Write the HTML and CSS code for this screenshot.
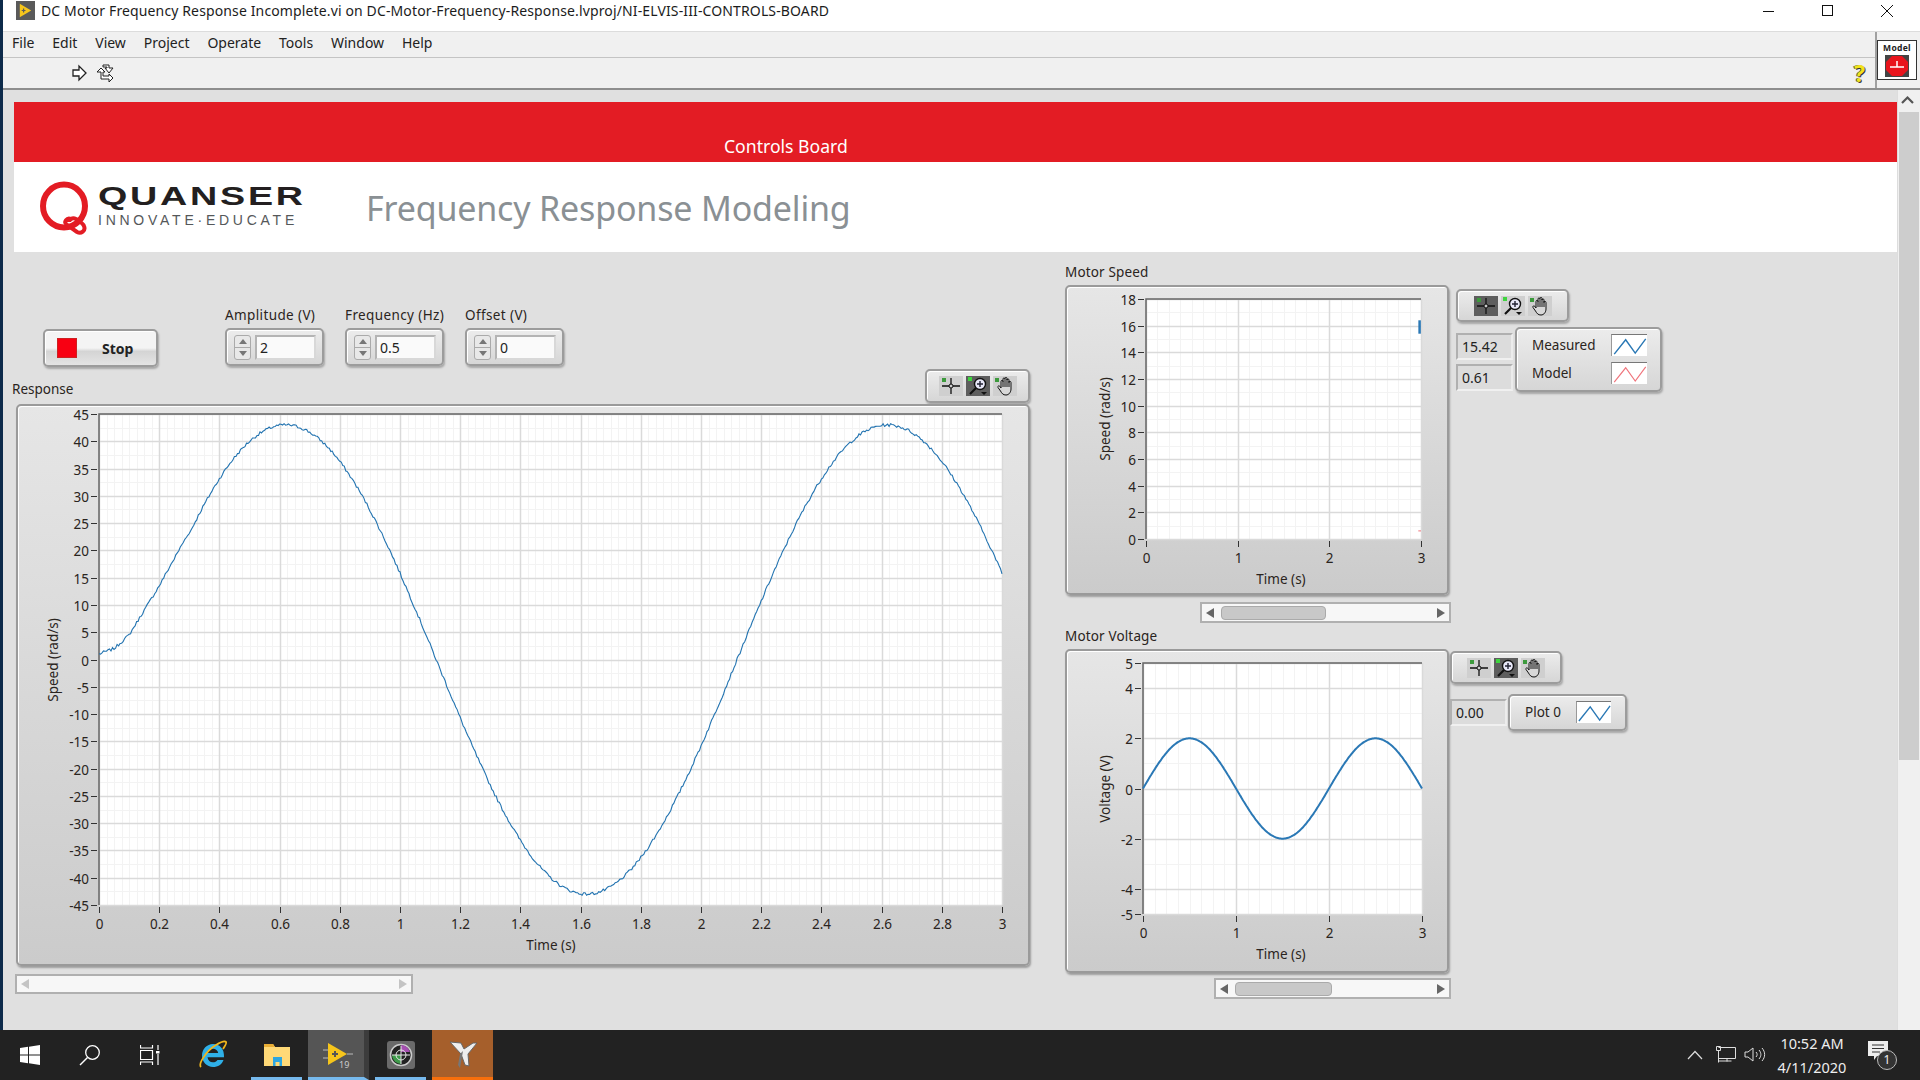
FILE: index.html
```html
<!DOCTYPE html>
<html lang="en">
<head>
  <meta charset="UTF-8" />
  <title>DC Motor Frequency Response</title>
  <link rel="stylesheet" href="styles.css">
</head>
<body>
  <svg class="defs" width="0" height="0">
    <symbol id="ic-cursor" viewBox="0 0 24 20">
      <rect x="3" y="2" width="4" height="4" fill="#3c9a3c"/>
      <path d="M12 2v16M3 10h18" stroke="#111" stroke-width="1.3"/>
      <circle cx="12" cy="10" r="2" fill="#ccc" stroke="#111"/>
    </symbol>
    <symbol id="ic-zoom" viewBox="0 0 24 20">
      <rect x="2" y="1" width="4" height="4" fill="#3fd43f"/>
      <circle cx="14" cy="8" r="5.5" fill="#e8e8f8" stroke="#111" stroke-width="1.4"/>
      <path d="M11 8h6M14 5v6" stroke="#223" stroke-width="1.4"/>
      <path d="M10 12l-6 6" stroke="#111" stroke-width="2.2"/>
      <path d="M15 16h6l-3 3z" fill="#111"/>
    </symbol>
    <symbol id="ic-hand" viewBox="0 0 24 20">
      <rect x="2" y="2" width="4" height="4" fill="#3c9a3c"/>
      <path d="M8 12V5.500c0-1.500 2-1.500 2 0V3c0-1.500 2-1.500 2 0V2.500c0-1.500 2-1.500 2 0V4c0-1.500 2-1.500 2 0v2.500c0-1.500 2-1.500 2 0V13c0 3-2 6-5 6-3 0-4-1.500-5.500-4L5 11.500c-.8-1.200.8-2.200 1.800-1.200z" fill="#d8d8d8" stroke="#111"/>
      <path d="M10 5v6M12 3v8M14 3v8M16 5v6" stroke="#111"/>
    </symbol>
    <symbol id="ic-lv" viewBox="0 0 20 20">
      <rect width="20" height="20" fill="#5a5a5a"/>
      <path d="M4 3l12 7-12 7z" fill="#f6c51b"/>
      <path d="M6 10h4M8 8v4" stroke="#5a5a5a" stroke-width="1.3"/>
    </symbol>
  </svg>

  <div class="screen">
    <div class="desk-edge"></div>
    <div class="window">
      <div class="titlebar">
        <svg class="title-icon" width="19" height="19"><use href="#ic-lv"/></svg>
        <span class="title-text">DC Motor Frequency Response Incomplete.vi on DC-Motor-Frequency-Response.lvproj/NI-ELVIS-III-CONTROLS-BOARD</span>
        <div class="win-btns">
          <svg width="59" height="22" viewBox="0 0 59 22"><path d="M24 11.5h11" stroke="#111"/></svg>
          <svg width="59" height="22" viewBox="0 0 59 22"><rect x="24.5" y="5.5" width="10" height="10" fill="none" stroke="#111"/></svg>
          <svg width="59" height="22" viewBox="0 0 59 22"><path d="M24 5l12 12M36 5L24 17" stroke="#111"/></svg>
        </div>
      </div>

      <div class="bars">
        <div class="bars-main">
          <div class="menubar">
            <span class="menu-item">File</span>
            <span class="menu-item">Edit</span>
            <span class="menu-item">View</span>
            <span class="menu-item">Project</span>
            <span class="menu-item">Operate</span>
            <span class="menu-item">Tools</span>
            <span class="menu-item">Window</span>
            <span class="menu-item">Help</span>
          </div>
          <div class="toolbar">
            <svg class="tb-run" width="18" height="18" viewBox="0 0 18 18"><path d="M3 6h6V2l7 7-7 7v-4H3z" fill="#fff" stroke="#222" stroke-width="1.3"/></svg>
            <svg class="tb-cont" width="22" height="20" viewBox="0 0 22 20"><path d="M8 2h6v3h4l-4 5-4-5h2V4H8zM2 9l4-4 4 4H8v4h6v-2l4 4-4 4v-3H6V9z" fill="#fff" stroke="#222"/></svg>
            <span class="help-mark">?</span>
          </div>
        </div>
        <div class="vi-icon">
          <div class="vi-box">
            <span class="vi-name">Model</span>
            <svg width="24" height="22" viewBox="0 0 24 22">
              <rect width="24" height="22" fill="#444"/>
              <path d="M7 1h10l6 6v8l-6 6H7l-6-6V7z" fill="#e8141c"/>
              <path d="M5 12h14M12 6v6" stroke="#fff" stroke-width="1.5"/>
            </svg>
          </div>
        </div>
      </div>

      <div class="workspace">
        <div class="panel">
          <div class="banner"><span class="banner-text">Controls Board</span></div>
          <div class="brand">
            <div class="logo">
              <svg class="logo-q" width="52" height="54" viewBox="0 0 52 54">
                <ellipse cx="24" cy="25" rx="21" ry="21.5" fill="none" stroke="#e31c24" stroke-width="6"/>
                <path d="M31 38c-4-2-8 3-4 6l10 7c4 2 9-1 7-6-1-3-5-5-8-7-4-2-7 1-7 3" fill="none" stroke="#e31c24" stroke-width="4"/>
              </svg>
              <div class="logo-words">
                <span class="logo-name">QUANSER</span>
                <span class="logo-tag">INNOVATE·EDUCATE</span>
              </div>
            </div>
            <h1 class="brand-title">Frequency Response Modeling</h1>
          </div>

          <div class="canvas">
            <button class="stop-btn"><span class="stop-led"></span><span class="stop-text">Stop</span></button>

            <div class="field field-amp">
              <span class="lbl">Amplitude (V)</span>
              <div class="num-ctl">
                <div class="spin"><span class="spin-up"></span><span class="spin-down"></span></div>
                <div class="num-box">2</div>
              </div>
            </div>
            <div class="field field-freq">
              <span class="lbl">Frequency (Hz)</span>
              <div class="num-ctl">
                <div class="spin"><span class="spin-up"></span><span class="spin-down"></span></div>
                <div class="num-box">0.5</div>
              </div>
            </div>
            <div class="field field-off">
              <span class="lbl">Offset (V)</span>
              <div class="num-ctl">
                <div class="spin"><span class="spin-up"></span><span class="spin-down"></span></div>
                <div class="num-box">0</div>
              </div>
            </div>

            <!-- response graph -->
            <span class="lbl lbl-response">Response</span>
            <div class="palette pal-response">
              <span class="tool"><svg width="24" height="20"><use href="#ic-cursor"/></svg></span>
              <span class="tool tool-on"><svg width="24" height="20"><use href="#ic-zoom"/></svg></span>
              <span class="tool"><svg width="24" height="20"><use href="#ic-hand"/></svg></span>
            </div>
            <div class="graph graph-response" id="g-response"></div>
            <div class="hscroll hs-response">
              <span class="arrow-l faint"></span><span class="arrow-r faint"></span>
            </div>

            <!-- motor speed -->
            <span class="lbl lbl-speed">Motor Speed</span>
            <div class="graph graph-speed" id="g-speed"></div>
            <div class="palette pal-speed">
              <span class="tool tool-on"><svg width="24" height="20"><use href="#ic-cursor"/></svg></span>
              <span class="tool"><svg width="24" height="20"><use href="#ic-zoom"/></svg></span>
              <span class="tool"><svg width="24" height="20"><use href="#ic-hand"/></svg></span>
            </div>
            <div class="readout ro-measured">15.42</div>
            <div class="readout ro-model">0.61</div>
            <div class="legend legend-speed">
              <div class="legend-row"><span class="legend-name">Measured</span>
                <svg class="swatch" width="36" height="22" viewBox="0 0 36 22"><path d="M2 20L14 5l10 14L35 4" fill="none" stroke="#2a78b5" stroke-width="1.5"/></svg></div>
              <div class="legend-row"><span class="legend-name">Model</span>
                <svg class="swatch" width="36" height="22" viewBox="0 0 36 22"><path d="M2 20L14 5l10 14L35 4" fill="none" stroke="#f0747c" stroke-width="1.2"/></svg></div>
            </div>
            <div class="hscroll hs-speed">
              <span class="arrow-l"></span><span class="thumb"></span><span class="arrow-r"></span>
            </div>

            <!-- motor voltage -->
            <span class="lbl lbl-voltage">Motor Voltage</span>
            <div class="graph graph-voltage" id="g-voltage"></div>
            <div class="palette pal-voltage">
              <span class="tool"><svg width="24" height="20"><use href="#ic-cursor"/></svg></span>
              <span class="tool tool-on"><svg width="24" height="20"><use href="#ic-zoom"/></svg></span>
              <span class="tool"><svg width="24" height="20"><use href="#ic-hand"/></svg></span>
            </div>
            <div class="readout ro-voltage">0.00</div>
            <div class="legend legend-voltage">
              <div class="legend-row"><span class="legend-name">Plot 0</span>
                <svg class="swatch" width="35" height="22" viewBox="0 0 36 22"><path d="M2 20L14 5l10 14L35 4" fill="none" stroke="#2a78b5" stroke-width="1.5"/></svg></div>
            </div>
            <div class="hscroll hs-voltage">
              <span class="arrow-l"></span><span class="thumb"></span><span class="arrow-r"></span>
            </div>
          </div>
        </div>

        <div class="vscroll">
          <svg class="vs-up" width="23" height="20" viewBox="0 0 23 20"><path d="M4 13l5.500-5.500L15 13" fill="none" stroke="#555" stroke-width="2.2"/></svg>
          <div class="vs-thumb"></div>
        </div>
      </div>
    </div>
  </div>

  <div class="taskbar">
    <div class="task-left">
      <span class="task-slot slot-sys">
        <svg width="20" height="20" viewBox="0 0 20 20"><path d="M0 3l8-1.200V9.500H0zM9 1.700L20 0v9.500H9zM0 10.500h8v7.700L0 17zM9 10.500h11V20L9 18.300z" fill="#fff"/></svg>
      </span>
      <span class="task-slot slot-sys">
        <svg width="22" height="22" viewBox="0 0 22 22"><circle cx="13.500" cy="8.500" r="6.800" fill="none" stroke="#fff" stroke-width="1.300"/><path d="M8.500 13.500L1 21" stroke="#fff" stroke-width="1.500"/></svg>
      </span>
      <span class="task-slot slot-sys">
        <svg width="20" height="20" viewBox="0 0 20 20"><path d="M.5 0v3h12V0M.5 20v-3h12v3M.5 5.500h12v9H.5zM18 0v5M18 9v11" fill="none" stroke="#fff" stroke-width="1.200"/><rect x="16" y="6" width="3.500" height="2.500" fill="#fff"/></svg>
      </span>
      <span class="task-slot slot-ie">
        <svg width="30" height="30" viewBox="0 0 30 30">
          <path d="M15 4c-6 0-11 5-11 11.500S9 27 15 27c5 0 9-2.500 10.500-7h-6c-1 1.500-2.600 2.300-4.500 2.300-3 0-5.200-2-5.500-5H26c.6-8-4-13.300-11-13.300zm-5.300 9c.5-2.500 2.600-4.200 5.300-4.200s4.800 1.700 5.200 4.200z" fill="#2fb0e8"/>
          <path d="M3 27C0 24 8 11 18 5c5-3 9-4 10-3 1 1-1 4-3 7" fill="none" stroke="#f2b71c" stroke-width="1.800"/>
        </svg>
      </span>
      <span class="task-slot task-open slot-files">
        <svg width="28" height="24" viewBox="0 0 28 24">
          <path d="M1 1h9l2 3h15v19H1z" fill="#ffd977"/>
          <path d="M1 1h9l2 3H1z" fill="#e9ae35"/>
          <path d="M10 14h9v9h-2.500v-4h-4v4H10z" fill="#2ea6e0"/>
        </svg>
      </span>
      <span class="task-slot task-open task-active">
        <svg width="30" height="32" viewBox="0 0 30 32">
          <rect x="2" y="2" width="26" height="28" fill="#555"/>
          <path d="M5 4l19 11L5 26z" fill="#f6c51b"/>
          <path d="M9 15h6M12 12v6" stroke="#555" stroke-width="2"/>
          <path d="M0 11h5M0 19h5M24 15h6" stroke="#bbb"/>
          <text x="16" y="29" class="lv-ver">19</text>
        </svg>
      </span>
      <span class="task-slot task-open slot-vision">
        <svg width="28" height="28" viewBox="0 0 28 28">
          <rect width="28" height="28" rx="3" fill="#6a6a6a"/>
          <circle cx="14" cy="14" r="10.500" fill="#222" stroke="#ccc" stroke-width="1.500"/>
          <path d="M14 4a10 10 0 0 1 9 7H14z" fill="#a54fb0"/>
          <path d="M5 14a9 9 0 0 0 9 9v-9z" fill="#3e9a4a"/>
          <path d="M14 5v18M5 14h18" stroke="#e8e8e8"/>
          <circle cx="14" cy="14" r="5" fill="none" stroke="#e8e8e8"/>
        </svg>
      </span>
      <span class="task-slot task-orange">
        <svg width="30" height="30" viewBox="0 0 30 30">
          <path d="M2 3l11 1 3 6 9-6 4 0-9 11 1 12-4-1-4-11z" fill="#eee" stroke="#666" stroke-width="1"/>
          <path d="M15 12l-3 17-2-3 2-11z" fill="#777"/>
        </svg>
      </span>
    </div>
    <div class="tray">
      <svg class="tray-up" width="16" height="10" viewBox="0 0 16 10"><path d="M1 9l7-7.500L15 9" fill="none" stroke="#ddd" stroke-width="1.200"/></svg>
      <svg width="22" height="18" viewBox="0 0 22 18"><path d="M4.500 1.500h17v11h-17M2.500.5h4v4h-4zM4.500 4.500v12M4.500 15h13M13 12.500v3" fill="none" stroke="#ddd"/></svg>
      <svg width="22" height="18" viewBox="0 0 22 18"><path d="M1 6h3l5-4v13l-5-4H1zM12 6c1.500 1.500 1.500 3.500 0 5M15 4c2.500 3 2.500 6 0 9M18 2c3.500 4 3.500 9 0 13" fill="none" stroke="#ddd"/></svg>
      <div class="clock"><span>10:52 AM</span><span>4/11/2020</span></div>
      <div class="notif">
        <svg width="22" height="20" viewBox="0 0 22 20"><path d="M0 0h20v15H9l-3 4v-4H0z" fill="#eee"/><path d="M4 4h12M4 7.500h12M4 11h8" stroke="#333"/></svg>
        <span class="notif-count">1</span>
      </div>
    </div>
  </div>

  <script src="chart.js"></script>
</body>
</html>
```

FILE: styles.css
```css
* {
  box-sizing: border-box;
}

body {
  margin: 0;
  width: 1920px;
  height: 1080px;
  overflow: hidden;
  font-family: "Noto Sans", sans-serif;
  font-size: 14px;
  color: #222;
  background: #202020;
}

.defs {
  position: absolute;
}

.screen {
  display: flex;
  height: 1030px;
}

.desk-edge {
  width: 3px;
  background: #0d2a4a;
}

.window {
  flex: 1;
  display: flex;
  flex-direction: column;
  min-width: 0;
}

/* title bar */
.titlebar {
  height: 32px;
  display: flex;
  align-items: center;
  background: #fff;
  padding-left: 13px;
  padding-bottom: 10px;
  border-bottom: 1px solid #dcdcdc;
  color: #1c1c1c;
}

.title-text {
  margin-left: 6px;
  font-size: 14px;
  white-space: nowrap;
  letter-spacing: 0.13px;
}

.win-btns {
  margin-left: auto;
  padding-right: 4px;
  display: flex;
}

/* menu + toolbar */
.bars {
  height: 58px;
  display: flex;
  background: #f0f0f0;
  border-bottom: 2px solid #8e8e8e;
}

.bars-main {
  flex: 1;
}

.menubar {
  height: 26px;
  display: flex;
  align-items: center;
  gap: 17.9px;
  padding-left: 9px;
  padding-bottom: 4px;
  border-bottom: 1px solid #c4c4c4;
  font-size: 14px;
}

.toolbar {
  height: 30px;
  display: flex;
  align-items: center;
  padding-left: 67px;
  gap: 7px;
}

.help-mark {
  margin-left: auto;
  margin-right: 10px;
  font-weight: 700;
  font-size: 23px;
  line-height: 28px;
  color: #f2e21a;
  text-shadow: 1px 1px 0 #333, -1px 0 0 #555;
}

.vi-icon {
  width: 45px;
  padding: 8px 3px 0 0;
  border-left: 2px solid #a0a0a0;
}

.vi-box {
  width: 40px;
  height: 40px;
  border: 1px solid #333;
  background: #fff;
  display: flex;
  flex-direction: column;
  align-items: center;
}

.vi-name {
  font-size: 8.5px;
  line-height: 14px;
  font-weight: 700;
  letter-spacing: .3px;
}

/* panel */
.workspace {
  flex: 1;
  display: flex;
  min-height: 0;
}

.panel {
  flex: 1;
  display: flex;
  flex-direction: column;
  padding-top: 12px;
  background: #e0e0e0;
  min-width: 0;
}

.banner {
  height: 60px;
  margin-left: 11px;
  background: #e31c24;
  color: #fff;
  font-size: 17.6px;
  padding-left: 710px;
  padding-top: 32px;
  line-height: 24px;
}

.brand {
  height: 90px;
  margin-left: 11px;
  background: #fff;
  display: flex;
  align-items: center;
}

.logo {
  display: flex;
  align-items: center;
  margin-left: 26px;
  width: 326px;
}

.logo-q {
  margin-top: 1px;
}

.logo-words {
  display: flex;
  flex-direction: column;
  margin-left: 6px;
  color: #231f20;
}

.logo-name {
  font-family: "Liberation Sans", sans-serif;
  font-weight: 700;
  font-size: 26px;
  line-height: 25px;
  letter-spacing: 1.9px;
  transform: scaleX(1.45);
  transform-origin: left;
}

.logo-tag {
  font-family: "Liberation Sans", sans-serif;
  font-size: 14px;
  line-height: 22px;
  letter-spacing: 3.75px;
  color: #55585a;
  white-space: nowrap;
}

.brand-title {
  margin: 2px 0 0;
  font-weight: 400;
  font-size: 34px;
  letter-spacing: -0.17px;
  color: #8a9094;
  white-space: nowrap;
}

.canvas {
  flex: 1;
  position: relative;
}

.lbl {
  font-size: 13.5px;
  line-height: 18px;
  white-space: nowrap;
  color: #2a2420;
}

.lbl-response {
  position: absolute;
  left: 9px;
  top: 128px;
}

.lbl-speed {
  position: absolute;
  left: 1062px;
  top: 11px;
  letter-spacing: .15px;
}

.lbl-voltage {
  position: absolute;
  left: 1062px;
  top: 375px;
  letter-spacing: .15px;
}

/* shared raised look */
.stop-btn,
.num-ctl,
.palette,
.legend {
  border: 2px solid #9c9c9c;
  border-radius: 5px;
  background: linear-gradient(#ececec, #d6d6d6);
  box-shadow: 1px 2px 2px rgba(0, 0, 0, 0.25), inset 1px 1px 0 #fff;
}

.stop-btn {
  position: absolute;
  left: 40px;
  top: 77px;
  width: 115px;
  height: 38px;
  padding: 0;
  display: flex;
  align-items: center;
  font-family: inherit;
  font-size: 14px;
  font-weight: 700;
  color: #222;
  background: linear-gradient(#f4f4f4 50%, #d4d4d4 60%, #e4e4e4);
}

.stop-led {
  width: 20px;
  height: 20px;
  margin-left: 12px;
  background: #f80012;
  border: 1px solid #c22;
}

.stop-text {
  margin-left: 25px;
}

.field {
  position: absolute;
  top: 54px;
  display: flex;
  flex-direction: column;
  gap: 4px;
}

.field .lbl {
  letter-spacing: .38px;
}

.field-amp {
  left: 222px;
}

.field-freq {
  left: 342px;
}

.field-off {
  left: 462px;
}

.num-ctl {
  width: 99px;
  height: 38px;
  display: flex;
  align-items: center;
  gap: 4px;
  padding-left: 7px;
}

.spin {
  width: 17px;
  height: 25px;
  display: flex;
  flex-direction: column;
  border: 1px solid #aaa;
  border-radius: 3px;
  background: #e8e8e8;
}

.spin-up,
.spin-down {
  flex: 1;
  display: flex;
  align-items: center;
  justify-content: center;
}

.spin-up {
  border-bottom: 1px solid #aaa;
}

.spin-up::after {
  content: "";
  border: 4px solid transparent;
  border-top: 0;
  border-bottom: 5px solid #777;
}

.spin-down::after {
  content: "";
  border: 4px solid transparent;
  border-bottom: 0;
  border-top: 5px solid #777;
}

.num-box {
  width: 61px;
  height: 25px;
  padding-left: 3px;
  line-height: 21px;
  font-size: 14px;
  background: #fafafa;
  border: 2px solid #b4b4b4;
  border-right-color: #d8d8d8;
  border-bottom-color: #d8d8d8;
}

.palette {
  position: absolute;
  display: flex;
  align-items: center;
  justify-content: center;
  gap: 3px;
}

.tool {
  width: 24px;
  height: 20px;
  display: block;
  background: #cfcfcf;
}

.tool svg {
  display: block;
}

.tool-on {
  background: #5e5e5e;
}

.pal-response {
  left: 922px;
  top: 117px;
  width: 105px;
  height: 34px;
}

.pal-speed {
  left: 1453px;
  top: 37px;
  width: 113px;
  height: 33px;
}

.pal-voltage {
  left: 1447px;
  top: 399px;
  width: 112px;
  height: 33px;
}

/* graphs, svg drawn by chart.js */
.graph {
  position: absolute;
  border: 2px solid #9a9a9a;
  border-radius: 5px;
  background: linear-gradient(#e6e6e6, #cbcbcb);
  box-shadow: 1px 2px 2px rgba(0, 0, 0, 0.3), inset 1px 1px 0 #fff;
}

.graph svg {
  display: block;
  position: absolute;
  left: -2px;
  top: -2px;
}

.graph text {
  font-family: "Noto Sans", sans-serif;
  font-size: 13.5px;
  fill: #2a2420;
}

.graph-response {
  left: 13px;
  top: 152px;
  width: 1014px;
  height: 562px;
}

.graph-speed {
  left: 1062px;
  top: 33px;
  width: 384px;
  height: 310px;
}

.graph-voltage {
  left: 1062px;
  top: 397px;
  width: 384px;
  height: 324px;
}

.readout {
  position: absolute;
  width: 57px;
  height: 27px;
  padding-left: 4px;
  font-size: 14px;
  line-height: 24px;
  background: #dcdcdc;
  border: 2px solid #b0b0b0;
  border-right-color: #ececec;
  border-bottom-color: #f0f0f0;
}

.ro-measured {
  left: 1453px;
  top: 81px;
}

.ro-model {
  left: 1453px;
  top: 112px;
}

.ro-voltage {
  left: 1447px;
  top: 447px;
}

.legend {
  position: absolute;
  display: flex;
  flex-direction: column;
  justify-content: center;
  gap: 6px;
}

.legend-row {
  display: flex;
  align-items: center;
  justify-content: space-between;
}

.legend-name {
  font-size: 13.5px;
  color: #2a2420;
}

.swatch {
  background: #fff;
  border-top: 1px solid #777;
  border-left: 1px solid #999;
}

.legend-speed {
  left: 1512px;
  top: 75px;
  width: 147px;
  height: 65px;
  padding: 0 13px 2px 15px;
}

.legend-voltage {
  left: 1505px;
  top: 442px;
  width: 119px;
  height: 37px;
  padding: 0 14px 2px 15px;
}

.hscroll {
  position: absolute;
  display: flex;
  align-items: center;
  background: #f7f7f7;
  border: 2px solid #b0b0b0;
  padding: 0 4px;
}

.arrow-l {
  width: 0;
  height: 0;
  border: 5px solid transparent;
  border-left: 0;
  border-right: 8px solid #666;
}

.arrow-r {
  width: 0;
  height: 0;
  margin-left: auto;
  border: 5px solid transparent;
  border-right: 0;
  border-left: 8px solid #666;
}

.arrow-l.faint {
  border-right-color: #c4c4c4;
}

.arrow-r.faint {
  border-left-color: #c4c4c4;
}

.thumb {
  height: 14px;
  margin-left: 7px;
  background: #c8c8c8;
  border: 1px solid #aaa;
  border-radius: 4px;
}

.hs-response {
  left: 12px;
  top: 722px;
  width: 398px;
  height: 20px;
}

.hs-speed {
  left: 1197px;
  top: 350px;
  width: 251px;
  height: 21px;
}

.hs-speed .thumb {
  width: 105px;
}

.hs-voltage {
  left: 1211px;
  top: 726px;
  width: 237px;
  height: 21px;
}

.hs-voltage .thumb {
  width: 97px;
}

.vscroll {
  width: 23px;
  background: #f0f0f0;
  border-left: 1px solid #ddd;
}

.vs-up {
  display: block;
}

.vs-thumb {
  height: 648px;
  margin: 2px 1px 0 1px;
  background: #cdcdcd;
}

/* taskbar */
.taskbar {
  height: 50px;
  display: flex;
  justify-content: space-between;
  background: #222;
  color: #eee;
}

.task-left {
  display: flex;
}

.task-slot {
  display: flex;
  align-items: center;
  justify-content: center;
}

.slot-sys {
  width: 60px;
}

.slot-ie {
  width: 71px;
  padding-right: 5px;
}

.task-open {
  height: 50px;
  border-bottom: 3px solid #76b9ed;
  padding-top: 2px;
}

.slot-files {
  width: 51px;
}

.task-active {
  width: 61px;
  margin-left: 6px;
  padding-left: 3px;
  background: #555;
  border-right: 5px solid #3c3c3c;
}

.slot-vision {
  width: 51px;
  margin-left: 6px;
}

.task-orange {
  width: 61px;
  margin-left: 6px;
  background: #a65f2b;
  border-bottom: 3px solid #f76f0c;
}

.lv-ver {
  font-family: "Noto Sans", sans-serif;
  font-size: 9px;
  fill: #ccc;
}

.tray {
  display: flex;
  align-items: center;
  padding-right: 24px;
  gap: 8px;
}

.tray-up {
  margin-right: 3px;
}

.clock {
  display: flex;
  flex-direction: column;
  align-items: center;
  font-size: 14.5px;
  line-height: 24px;
  margin-left: 2px;
  width: 72px;
}

.notif {
  position: relative;
  margin-left: 12px;
  width: 28px;
  height: 28px;
}

.notif-count {
  position: absolute;
  left: 9px;
  top: 9px;
  width: 20px;
  height: 20px;
  border-radius: 50%;
  border: 1px solid #bbb;
  background: #333;
  font-size: 12px;
  line-height: 18px;
  text-align: center;
}
```

FILE: chart.js
```js
// draws the three LabVIEW style graphs into their frames
const NS = "http://www.w3.org/2000/svg";

function el(parent, name, attrs, text) {
  const node = document.createElementNS(NS, name);
  for (const k in attrs) node.setAttribute(k, attrs[k]);
  if (text !== undefined) node.textContent = text;
  parent.appendChild(node);
  return node;
}

function range(from, to, step) {
  const out = [];
  const n = Math.round((to - from) / step);
  for (let i = 0; i <= n; i++) out.push(from + i * step);
  return out;
}

function drawGraph(cfg) {
  const host = document.getElementById(cfg.id);
  const svg = el(host, "svg", { width: cfg.w, height: cfg.h });
  const p = cfg.plot;
  const sx = (v) => p.x + ((v - cfg.xMin) / (cfg.xMax - cfg.xMin)) * p.w;
  const sy = (v) => p.y + p.h - ((v - cfg.yMin) / (cfg.yMax - cfg.yMin)) * p.h;

  el(svg, "rect", { x: p.x, y: p.y, width: p.w, height: p.h, fill: "#fff" });

  // minor grid first, majors on top
  cfg.xMinor.forEach((v) => {
    const x = Math.round(sx(v)) + 0.5;
    el(svg, "path", { d: `M${x} ${p.y}V${p.y + p.h}`, stroke: "#f3f3f3" });
  });
  cfg.yMinor.forEach((v) => {
    const y = Math.round(sy(v)) + 0.5;
    el(svg, "path", { d: `M${p.x} ${y}H${p.x + p.w}`, stroke: "#f3f3f3" });
  });
  cfg.xTicks.forEach((v) => {
    const x = Math.round(sx(v)) + 0.5;
    el(svg, "path", { d: `M${x} ${p.y}V${p.y + p.h}`, stroke: "#dadada", "stroke-width": 1.5 });
    el(svg, "path", { d: `M${x} ${p.y + p.h + 2}v6`, stroke: "#333" });
    el(svg, "text", { x: x, y: p.y + p.h + 24, "text-anchor": "middle" }, cfg.xFmt(v));
  });
  cfg.yTicks.forEach((v) => {
    const y = Math.round(sy(v)) + 0.5;
    el(svg, "path", { d: `M${p.x} ${y}H${p.x + p.w}`, stroke: "#dadada", "stroke-width": 1.5 });
    el(svg, "path", { d: `M${p.x - 8} ${y}h6`, stroke: "#333" });
    el(svg, "text", { x: p.x - 10, y: y + 5, "text-anchor": "end" }, String(v));
  });

  // plot frame, top and left only
  el(svg, "path", { d: `M${p.x} ${p.y + p.h}V${p.y}H${p.x + p.w}`, fill: "none", stroke: "#666", "stroke-width": 1.5 });

  el(svg, "text", { x: cfg.xLabel.x, y: cfg.xLabel.y, "text-anchor": "middle" }, "Time (s)");
  el(svg, "text", {
    x: 0, y: 0, "text-anchor": "middle",
    transform: `translate(${cfg.yLabel.x} ${cfg.yLabel.y}) rotate(-90)`,
  }, cfg.yLabel.text);

  (cfg.traces || []).forEach((tr) => {
    const d = tr.points.map((pt, i) => `${i ? "L" : "M"}${sx(pt[0]).toFixed(1)} ${sy(pt[1]).toFixed(1)}`).join("");
    el(svg, "path", { d: d, fill: "none", stroke: tr.color, "stroke-width": tr.width });
  });
}

// measured speed: a sine with a slow start and a little sensor noise
function responseAt(t) {
  const start = [[0, 1], [0.05, 2], [0.1, 4.5], [0.2, 13.5], [0.3, 23.5]];
  if (t >= 0.3) return 43 * Math.sin(Math.PI * (t - 0.12));
  for (let i = 1; i < start.length; i++) {
    if (t <= start[i][0]) {
      const a = start[i - 1], b = start[i];
      return a[1] + ((t - a[0]) / (b[0] - a[0])) * (b[1] - a[1]);
    }
  }
  return 0;
}

let seed = 7;
function noise() {
  seed = (seed * 1103515245 + 12345) % 2147483648;
  return seed / 2147483648 - 0.5;
}

const responsePts = range(0, 3, 0.005).map((t) => [t, responseAt(t) + 0.55 * noise()]);
const voltagePts = range(0, 3, 0.01).map((t) => [t, 2 * Math.sin(Math.PI * t)]);

drawGraph({
  id: "g-response", w: 1014, h: 562,
  plot: { x: 83, y: 10, w: 903, h: 491 },
  xMin: 0, xMax: 3, yMin: -45, yMax: 45,
  xTicks: range(0, 3, 0.2), xMinor: range(0, 3, 0.025),
  yTicks: range(-45, 45, 5), yMinor: range(-45, 45, 2.5),
  xFmt: (v) => String(Math.round(v * 10) / 10),
  xLabel: { x: 535, y: 546 },
  yLabel: { x: 42, y: 256, text: "Speed (rad/s)" },
  traces: [{ points: responsePts, color: "#2273b0", width: 1.1 }],
});

drawGraph({
  id: "g-speed", w: 384, h: 310,
  plot: { x: 81, y: 14, w: 275, h: 240 },
  xMin: 0, xMax: 3, yMin: 0, yMax: 18,
  xTicks: range(0, 3, 1), xMinor: range(0, 3, 0.125),
  yTicks: range(0, 18, 2), yMinor: range(0, 18, 1),
  xFmt: (v) => String(v),
  xLabel: { x: 216, y: 299 },
  yLabel: { x: 45, y: 134, text: "Speed (rad/s)" },
  traces: [
    { points: [[2.985, 15.4], [2.985, 16.4]], color: "#2a78b5", width: 2.5 },
    { points: [[2.97, 0.61], [3, 0.61]], color: "#f0747c", width: 1 },
  ],
});

drawGraph({
  id: "g-voltage", w: 384, h: 324,
  plot: { x: 78, y: 14, w: 279, h: 251 },
  xMin: 0, xMax: 3, yMin: -5, yMax: 5,
  xTicks: range(0, 3, 1), xMinor: range(0, 3, 0.125),
  yTicks: [-5, -4, -2, 0, 2, 4, 5], yMinor: range(-5, 5, 1),
  xFmt: (v) => String(v),
  xLabel: { x: 216, y: 310 },
  yLabel: { x: 45, y: 140, text: "Voltage (V)" },
  traces: [{ points: voltagePts, color: "#2a78b5", width: 2 }],
});
```
